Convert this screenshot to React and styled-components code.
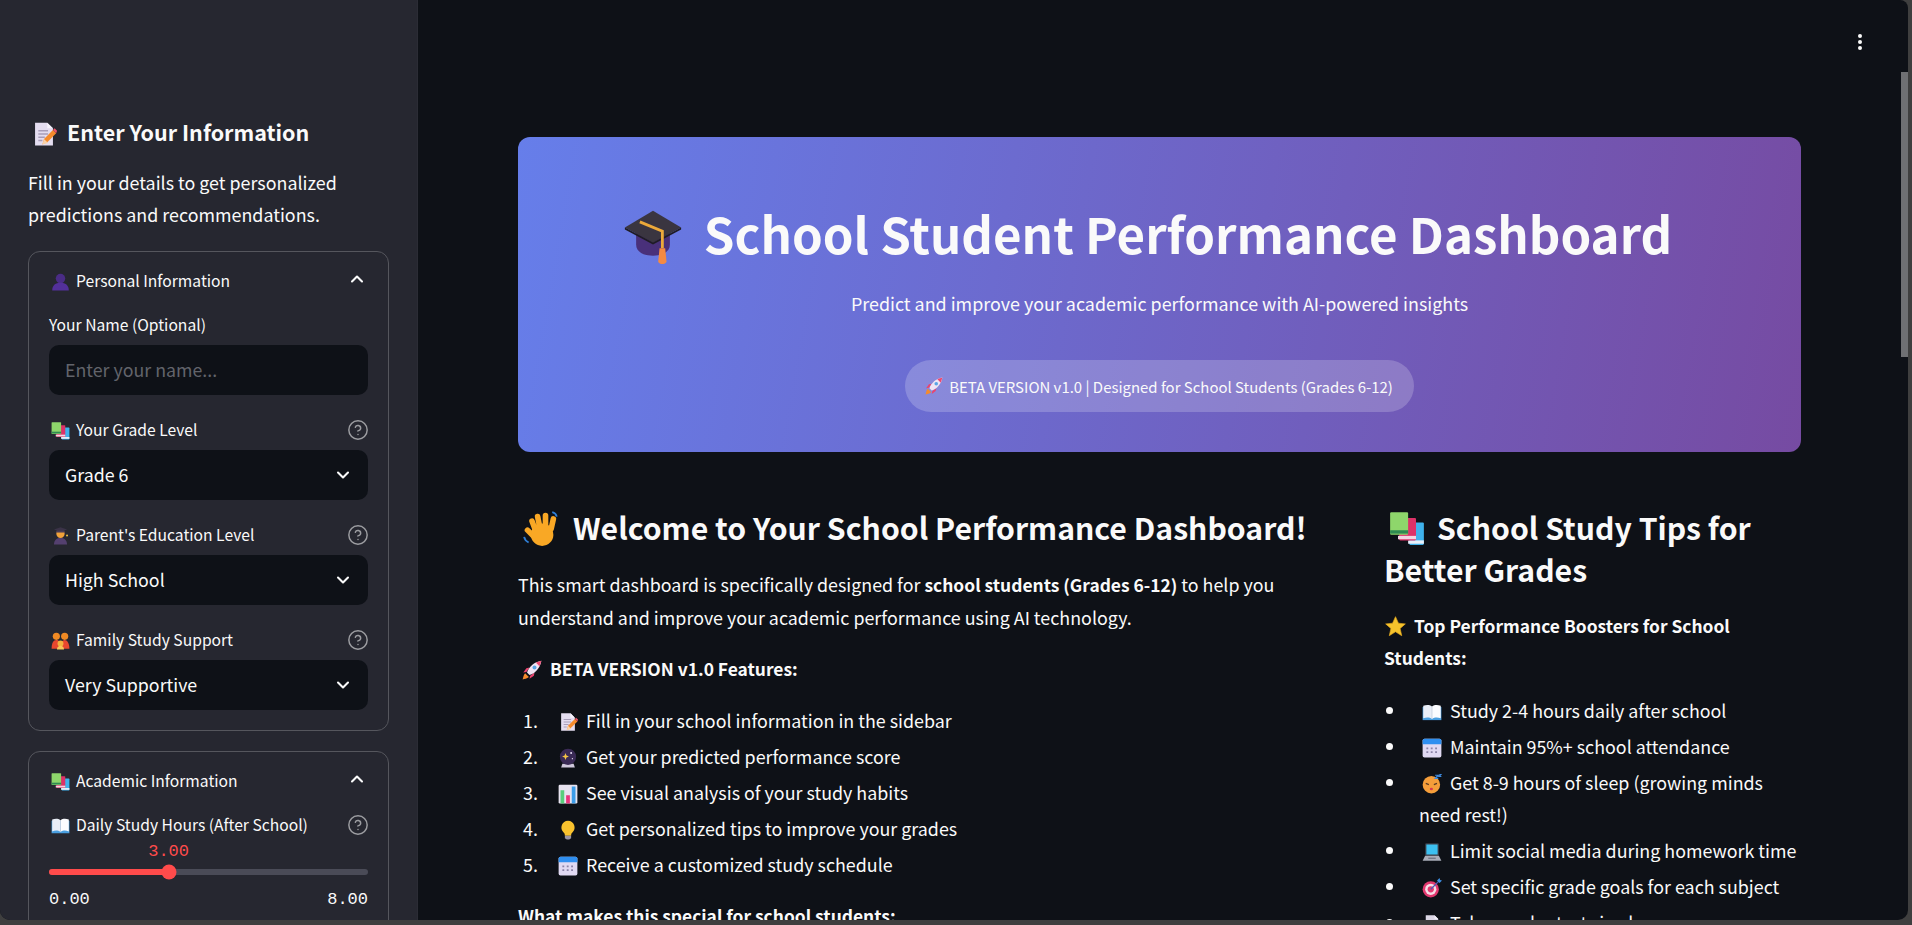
import React from "react";
import styled, { createGlobalStyle } from "styled-components";
import { ChevronDown, ChevronUp, CircleHelp } from "lucide-react";

const GlobalStyle = createGlobalStyle`
  html, body { margin: 0; padding: 0; height: 100%; overflow: hidden; background: #3f3f3f; }
  body { font-family: "Noto Sans CJK SC", "Noto Sans", sans-serif; color: #fafafa; }
  * { box-sizing: border-box; }
`;

const Frame = styled.div`
  position: relative;
  display: flex;
  width: 1908px;
  height: 920px;
  overflow: hidden;
  border-radius: 0 8px 10px 10px;
  background: #0e1117;
`;

const Sidebar = styled.aside`
  flex: 0 0 418px;
  padding: 114px 28px 0 28px;
  background: #262730;
  border-right: 1px solid #2b2c35;
  overflow: hidden;
`;

const SideTitle = styled.h3`
  margin: 0 0 16px;
  font-size: 21.5px;
  font-weight: 600;
  line-height: 36px;
  white-space: nowrap;
`;

const Copy = styled.p`
  margin: 0 0 ${props => props.gap || 20}px;
  font-size: ${props => props.strong ? 17.4 : 17.87}px;
  line-height: 32px;
  font-weight: ${props => props.strong ? 700 : 400};
`;

const Strong = styled.strong`
  font-size: 17.4px;
  font-weight: 700;
`;

const Expander = styled.section`
  margin: 0 0 20px;
  border: 1px solid #55565d;
  border-radius: 12px;
  padding: 0 20px 20px;
`;

const Summary = styled.div`
  display: flex;
  align-items: flex-start;
  justify-content: space-between;
  height: 61px;
  padding: 16.5px 1px 0 2px;
  font-size: 15.65px;
  line-height: 24px;
  color: #fafafa;
`;

const Field = styled.div`
  margin-bottom: ${props => props.last ? 0 : 23}px;
`;

const LabelRow = styled.div`
  display: flex;
  align-items: center;
  justify-content: space-between;
  height: 24px;
  padding-bottom: 1px;
  margin-bottom: ${props => props.tight ? 1 : 8}px;
  font-size: 15.65px;
  line-height: 24px;
  white-space: nowrap;
`;

const Label = styled.span`
  padding-left: ${props => props.inset ? 2 : 0}px;
`;

const HelpIcon = styled(CircleHelp)`
  width: 22px;
  height: 22px;
  margin: 1px -1px 0 0;
  color: #9c9da1;
  stroke-width: 1.6;
`;

const Control = styled.div`
  display: flex;
  align-items: center;
  justify-content: space-between;
  height: 50px;
  padding: 0 15px 2px 16px;
  border-radius: 10px;
  background: #0e1117;
  font-size: 17.8px;
  color: ${props => props.placeholder ? "#62646b" : "#fafafa"};
`;

const SelectChevron = styled(ChevronDown)`
  width: 20px;
  height: 20px;
  margin-top: 2px;
  stroke-width: 2.5;
`;

const SliderValue = styled.div`
  position: relative;
  height: 24px;
  font-family: "Liberation Mono", "DejaVu Sans Mono", monospace;
  font-size: 17px;
  line-height: 27px;
  color: #ff4b4b;
`;

const SliderValueText = styled.span`
  position: absolute;
  transform: translateX(-50%);
`;

const Track = styled.div`
  position: relative;
  height: 6px;
  margin: 7px 0 12px;
  border-radius: 3px;
  background: #4a4b57;
`;

const TrackFill = styled.div`
  height: 100%;
  border-radius: 3px;
  background: #ff4b4b;
`;

const Thumb = styled.div`
  position: absolute;
  top: 50%;
  width: 15px;
  height: 15px;
  border-radius: 50%;
  background: #ff4b4b;
  transform: translate(-50%, -50%);
`;

const Ticks = styled.div`
  display: flex;
  justify-content: space-between;
  height: 24px;
  font-family: "Liberation Mono", "DejaVu Sans Mono", monospace;
  font-size: 17px;
  line-height: 26px;
`;

const Main = styled.main`
  flex: 1;
  min-width: 0;
  padding: 137px 107px 0 100px;
  overflow: hidden;
`;

const Hero = styled.header`
  height: 315px;
  padding-top: 62px;
  border-radius: 12px;
  background: linear-gradient(100deg, #667eea 0%, #764ba2 100%);
  text-align: center;
`;

const HeroTitle = styled.h1`
  margin: 0 0 22px;
  padding-right: 24px;
  font-size: 49.2px;
  font-weight: 700;
  line-height: 68px;
  white-space: nowrap;
`;

const HeroSub = styled.p`
  margin: 0 0 43px;
  font-size: 17.9px;
  line-height: 28px;
`;

const Pill = styled.div`
  display: inline-flex;
  align-items: center;
  height: 52px;
  padding: 0 21px 0 20px;
  border-radius: 26px;
  background: rgba(255, 255, 255, 0.2);
  font-size: 14.95px;
  white-space: nowrap;
`;

const Columns = styled.div`
  display: grid;
  grid-template-columns: 2fr 1fr;
  gap: 32px;
  margin-top: 54px;
`;

const SectionTitle = styled.h2`
  margin: 0 0 20px;
  font-size: 30.2px;
  font-weight: 600;
  line-height: 42px;
`;

const List = styled.ul`
  margin: 0 0 20px;
  padding: 0;
  list-style: none;
`;

const Item = styled.li`
  display: grid;
  grid-template-columns: 35px 1fr;
  margin-bottom: 4px;
  font-size: 17.87px;
  line-height: 32px;
`;

const Number = styled.span`
  padding-left: 5px;
`;

const Bullet = styled.span`
  width: 7px;
  height: 7px;
  margin: 13px 0 0 2px;
  border-radius: 50%;
  background: #fafafa;
`;

const Glyph = styled.svg`
  display: inline-block;
  width: ${props => props.size}px;
  height: ${props => props.size}px;
  margin: 0 ${props => props.after}px 0 ${props => props.before}px;
  vertical-align: ${props => props.drop}px;
  flex: none;
`;

const Scrollbar = styled.div`
  position: absolute;
  top: 72px;
  right: 0;
  width: 7px;
  height: 285px;
  background: #6f7073;
`;

const MenuDots = styled.svg`
  position: absolute;
  top: 33px;
  left: 1856px;
  width: 8px;
  height: 18px;
`;

const shapes = {
  memo: <>
    <path d="M5 2h15l7 7v21H5z" fill="#e4ddf0" />
    <path d="M20 2l7 7h-7z" fill="#f7f3fc" />
    <path d="M9 12h12M9 16h12M9 20h8M9 24h5" stroke="#a89db9" strokeWidth="1.6" />
    <path d="M14 29l2-7L27 11l4 4-11 11z" fill="#f58b2c" />
    <path d="M14 29l2-7 5 5z" fill="#f9d2a8" />
    <path d="M27 11l2-2 3 3-1 3z" fill="#f0566a" />
  </>,
  bust: <>
    <circle cx="16" cy="11" r="8" fill="#4a2c86" />
    <path d="M2 31c0-9 6-13 14-13s14 4 14 13z" fill="#53309a" />
  </>,
  books: <>
    <rect x="18" y="11" width="13" height="20" rx="1" fill="#3fb2ec" />
    <rect x="17" y="27" width="14" height="3" fill="#e8f0fa" />
    <rect x="9" y="7" width="15" height="20" rx="1" fill="#dc3268" />
    <rect x="8" y="23" width="16" height="3" fill="#f3d5e2" />
    <rect x="1" y="2" width="16" height="20" rx="1" fill="#8ed66b" />
    <rect x="1" y="18" width="16" height="3" fill="#2f8a52" />
  </>,
  student: <>
    <path d="M5 31c0-8 5-11 11-11s11 3 11 11z" fill="#54406f" />
    <circle cx="16" cy="13" r="7" fill="#f0a23a" />
    <path d="M5 6l11-4 11 4-11 4z" fill="#3b3348" />
    <path d="M9 8h14v3H9z" fill="#4a3c55" />
    <circle cx="27" cy="16" r="1.6" fill="#f4c542" />
  </>,
  family: <>
    <circle cx="9" cy="9" r="6" fill="#f08a24" />
    <circle cx="23" cy="9" r="6" fill="#f08a24" />
    <path d="M1 30c0-10 3-15 8-15s7 4 7 15z" fill="#e9472f" />
    <path d="M16 30c0-10 3-15 7-15s8 5 8 15z" fill="#e9472f" />
    <circle cx="16" cy="21" r="5" fill="#f4b13f" />
    <path d="M10 31c0-4 3-6 6-6s6 2 6 6z" fill="#f7c65a" />
  </>,
  openBook: <>
    <path d="M1 8h30v21H1z" fill="#4a9fe0" />
    <path d="M2 6c5-2 10-2 14 1v20c-4-3-9-3-14-1z" fill="#e9eef7" />
    <path d="M30 6c-5-2-10-2-14 1v20c4-3 9-3 14-1z" fill="#fbfcff" />
    <path d="M16 7v20" stroke="#b7c3d6" strokeWidth="1" />
  </>,
  cap: <>
    <path d="M7 14v7c0 4 4 6 9 6s9-2 9-6v-7z" fill="#49307a" />
    <path d="M1 12L16 3l15 9-15 8z" fill="#3a3540" />
    <path d="M1 12l15 8 15-8v1l-15 8-15-8z" fill="#1f1c24" />
    <path d="M9 9l12 5v9" fill="none" stroke="#eca93a" strokeWidth="1.5" />
    <path d="M19.5 23h3l.7 7c0 2-4.400 2-4.400 0z" fill="#f58a42" />
  </>,
  rocket: <>
    <path d="M5 21c-3 3-3 7-4 10 3-1 7-1 10-4z" fill="#f58b2c" />
    <path d="M7 19l-5 1 5-7 5-1zM13 25l-1 5 7-5 1-5z" fill="#e9446f" />
    <path d="M8 20C11 11 19 3 31 1c-2 12-10 20-19 23z" fill="#f0e4f3" />
    <path d="M22 4c2-1 6-2 9-3-1 3-2 7-3 9z" fill="#ec4a72" />
    <circle cx="20" cy="12" r="3.200" fill="#5aa5e6" />
  </>,
  wave: <>
    <g stroke="#f9a825" strokeWidth="5" strokeLinecap="round" fill="none">
      <path d="M11 17L8 9M15 15L13 5M20 14L20 4M25 16L27 7M9 22L4 17" />
    </g>
    <circle cx="17" cy="21" r="10" fill="#f9a825" />
    <path d="M26 1c2 .5 3.500 2 4 4M1 23c.5 2.500 2 4 4 5" fill="none" stroke="#2f7fd6" strokeWidth="1.600" />
  </>,
  crystal: <>
    <path d="M7 25h18l2 6H5z" fill="#cfc8dc" />
    <circle cx="16" cy="14" r="13" fill="#3a2a55" />
    <path d="M12 8l1.500 4 4 1.500-4 1.500-1.500 4-1.500-4-4-1.500 4-1.500z" fill="#f6c445" />
    <circle cx="21" cy="8" r="1.500" fill="#f3e8ff" />
    <circle cx="23" cy="17" r="1" fill="#f3e8ff" />
  </>,
  chart: <>
    <rect x="1" y="1" width="30" height="30" rx="2" fill="#e7e3f0" />
    <rect x="4" y="10" width="6" height="21" fill="#58cf7c" />
    <rect x="13" y="18" width="6" height="13" fill="#e9347c" />
    <rect x="22" y="4" width="6" height="27" fill="#3c9de8" />
  </>,
  bulb: <>
    <path d="M16 1a11 11 0 0 1 7 19c-1 1-2 2-2 5H11c0-3-1-4-2-5a11 11 0 0 1 7-19z" fill="#f9c22e" />
    <path d="M11 25h10v4l-3 2h-4l-3-2z" fill="#9a94a3" />
  </>,
  calendar: <>
    <rect x="1" y="1" width="30" height="30" rx="3" fill="#e0d9f2" />
    <path d="M1 10V4a3 3 0 0 1 3-3h24a3 3 0 0 1 3 3v6z" fill="#2f8ff0" />
    <path d="M7 15h3v3H7zM14 15h3v3h-3zM21 15h3v3h-3zM7 21h3v3H7zM14 21h3v3h-3zM21 21h3v3h-3z" fill="#8b84a8" />
  </>,
  star: <>
    <path d="M16 1l4.500 10 10.500 1-8 7 2.500 11-9.500-6-9.500 6 2.500-11-8-7 10.500-1z" fill="#f5c32c" stroke="#e4a81e" strokeWidth="1" strokeLinejoin="round" />
  </>,
  sleep: <>
    <circle cx="15" cy="17" r="14" fill="#f59e3a" />
    <path d="M6 15l5 2M24 15l-5 2" stroke="#5b3a22" strokeWidth="1.800" />
    <ellipse cx="15" cy="24" rx="2.500" ry="2" fill="#d83a4f" />
    <path d="M21 2h5l-5 5h5M27 0h4l-4 4h4" fill="none" stroke="#3f8ce0" strokeWidth="1.800" />
  </>,
  laptop: <>
    <rect x="5" y="2" width="22" height="20" rx="2" fill="#3b3f4a" />
    <rect x="7" y="4" width="18" height="16" fill="#3cc0f0" />
    <path d="M5 22h22l4 8H1z" fill="#a9adb8" />
    <path d="M10 25h12v2H10z" fill="#6d7280" />
  </>,
  target: <>
    <circle cx="14" cy="18" r="13" fill="#e2386f" />
    <circle cx="14" cy="18" r="9" fill="#f5dde6" />
    <circle cx="14" cy="18" r="5" fill="#e2386f" />
    <path d="M14 18L27 5" stroke="#4a5ab8" strokeWidth="2" />
    <path d="M24 4l4-4 1 3 3 1-4 4z" fill="#3c8de0" />
  </>,
  doc: <>
    <path d="M6 2h14l6 6v22H6z" fill="#dcd7e6" />
    <path d="M20 2l6 6h-6z" fill="#f3f0f8" />
  </>
};

const Emoji = ({ name, size = 20, after = 8, before = 0, drop = -4 }) => (
  <Glyph viewBox="0 0 32 32" size={size} after={after} before={before} drop={drop} aria-hidden="true">
    {shapes[name]}
  </Glyph>
);

const selects = [
  { icon: "books", label: "Your Grade Level", value: "Grade 6" },
  { icon: "student", label: "Parent's Education Level", value: "High School" },
  { icon: "family", label: "Family Study Support", value: "Very Supportive" }
];

const steps = [
  { icon: "memo", text: "Fill in your school information in the sidebar" },
  { icon: "crystal", text: "Get your predicted performance score" },
  { icon: "chart", text: "See visual analysis of your study habits" },
  { icon: "bulb", text: "Get personalized tips to improve your grades" },
  { icon: "calendar", text: "Receive a customized study schedule" }
];

const tips = [
  { icon: "openBook", text: "Study 2-4 hours daily after school" },
  { icon: "calendar", text: "Maintain 95%+ school attendance" },
  { icon: "sleep", text: "Get 8-9 hours of sleep (growing minds need rest!)" },
  { icon: "laptop", text: "Limit social media during homework time" },
  { icon: "target", text: "Set specific grade goals for each subject" },
  { icon: "doc", text: "Take regular tests in class" }
];

const App = () => {
  const studyHours = 3;
  const studyMax = 8;
  const studyPercent = `${(studyHours / studyMax) * 100}%`;

  return (
    <Frame>
      <GlobalStyle />
      <Sidebar>
        <SideTitle><Emoji name="memo" size={26} before={3} after={10} drop={-6} />Enter Your Information</SideTitle>
        <Copy gap={21}>Fill in your details to get personalized predictions and recommendations.</Copy>

        <Expander>
          <Summary>
            <span><Emoji name="bust" size={19} after={6} />Personal Information</span>
            <ChevronUp size={20} strokeWidth={2.5} />
          </Summary>
          <Field>
            <LabelRow><Label>Your Name (Optional)</Label></LabelRow>
            <Control placeholder="true">Enter your name...</Control>
          </Field>
          {selects.map((select, i) => (
            <Field key={select.label} last={i === selects.length - 1}>
              <LabelRow>
                <Label inset="true"><Emoji name={select.icon} size={19} after={6} />{select.label}</Label>
                <HelpIcon />
              </LabelRow>
              <Control>{select.value}<SelectChevron /></Control>
            </Field>
          ))}
        </Expander>

        <Expander>
          <Summary>
            <span><Emoji name="books" size={19} after={6} />Academic Information</span>
            <ChevronUp size={20} strokeWidth={2.5} />
          </Summary>
          <LabelRow tight="true">
            <Label inset="true"><Emoji name="openBook" size={19} after={6} />Daily Study Hours (After School)</Label>
            <HelpIcon />
          </LabelRow>
          <SliderValue><SliderValueText style={{ left: studyPercent }}>3.00</SliderValueText></SliderValue>
          <Track>
            <TrackFill style={{ width: studyPercent }} />
            <Thumb style={{ left: studyPercent }} />
          </Track>
          <Ticks><span>0.00</span><span>8.00</span></Ticks>
        </Expander>
      </Sidebar>

      <Main>
        <Hero>
          <HeroTitle><Emoji name="cap" size={60} after={21} drop={-11} />School Student Performance Dashboard</HeroTitle>
          <HeroSub>Predict and improve your academic performance with AI-powered insights</HeroSub>
          <Pill><Emoji name="rocket" size={18} after={6} />BETA VERSION v1.0 | Designed for School Students (Grades 6-12)</Pill>
        </Hero>

        <Columns>
          <div>
            <SectionTitle><Emoji name="wave" size={36} before={5} after={14} drop={-7} />Welcome to Your School Performance Dashboard!</SectionTitle>
            <Copy>This smart dashboard is specifically designed for <Strong>school students (Grades 6-12)</Strong> to help you understand and improve your academic performance using AI technology.</Copy>
            <Copy strong="true" gap={19}><Emoji name="rocket" size={20} before={4} after={8} />BETA VERSION v1.0 Features:</Copy>
            <List as="ol">
              {steps.map((step, i) => (
                <Item key={step.text}>
                  <Number>{i + 1}.</Number>
                  <span><Emoji name={step.icon} before={5} />{step.text}</span>
                </Item>
              ))}
            </List>
            <Copy strong="true">What makes this special for school students:</Copy>
          </div>
          <div>
            <SectionTitle><Emoji name="books" size={36} before={5} after={12} drop={-6} />School Study Tips for Better Grades</SectionTitle>
            <Copy strong="true"><Emoji name="star" size={21} before={1} after={8} />Top Performance Boosters for School Students:</Copy>
            <List>
              {tips.map(tip => (
                <Item key={tip.text}>
                  <Bullet />
                  <span><Emoji name={tip.icon} before={3} />{tip.text}</span>
                </Item>
              ))}
            </List>
          </div>
        </Columns>
      </Main>

      <MenuDots viewBox="0 0 8 18">
        <circle cx="4" cy="3" r="2" fill="#fafafa" />
        <circle cx="4" cy="9" r="2" fill="#fafafa" />
        <circle cx="4" cy="15" r="2" fill="#fafafa" />
      </MenuDots>
      <Scrollbar />
    </Frame>
  );
};

export default App;
